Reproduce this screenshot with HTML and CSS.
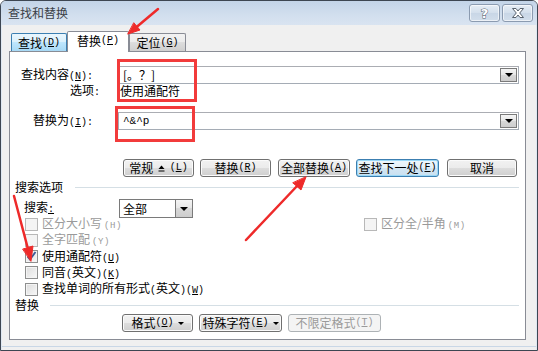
FILE: index.html
```html
<!DOCTYPE html>
<html lang="zh-CN">
<head>
<meta charset="utf-8">
<title>查找和替换</title>
<link rel="stylesheet" href="styles.css">
</head>
<body>
<div class="window">
  <div class="titlebar">
    <span class="title">查找和替换</span>
    <div class="capbtns">
      <div class="capbtn"><span class="help">?</span></div>
      <div class="capbtn">
        <svg width="16" height="12" viewBox="0 0 16 12"><path d="M2.5 1.5h3.5l2 2.5 2-2.5h3.5l-3.8 4.5 3.8 4.5h-3.5l-2-2.5-2 2.5h-3.5l3.8-4.5z" fill="#fff" stroke="#58626e" stroke-width="1" stroke-linejoin="round"/></svg>
      </div>
    </div>
  </div>

  <div class="tabs">
    <div class="tab tab-hover">查找<span class="m">(<u>D</u>)</span></div>
    <div class="tab tab-active">替换<span class="m">(<u>P</u>)</span></div>
    <div class="tab tab-plain">定位<span class="m">(<u>G</u>)</span></div>
  </div>

  <div class="panel">
    <div class="frow">
      <label class="flabel">查找内容<span class="m">(<u>N</u>):</span></label>
      <div class="combo">
        <span class="ctext cjk">[。？]</span>
        <span class="dd"><i class="tri"></i></span>
      </div>
    </div>
    <div class="orow">
      <span class="olabel">选项<span class="m">:</span></span>
      <span class="ovalue">使用通配符</span>
    </div>
    <div class="frow frow2">
      <label class="flabel">替换为<span class="m">(<u>I</u>):</span></label>
      <div class="combo">
        <span class="ctext mono">^&amp;^p</span>
        <span class="dd"><i class="tri"></i></span>
      </div>
    </div>

    <div class="btnrow">
      <button class="btn w71">常规&nbsp;<svg class="updown" width="7" height="7" viewBox="0 0 7 7"><path d="M3.5 0.5L6.5 4H0.5z" fill="#000"/><rect x="0.5" y="5.5" width="6" height="1" fill="#000"/></svg>&nbsp;<span class="m">(<u>L</u>)</span></button>
      <button class="btn w71 g6">替换<span class="m">(<u>R</u>)</span></button>
      <button class="btn w72 g7">全部替换<span class="m">(<u>A</u>)</span></button>
      <button class="btn w83 g6 btn-default">查找下一处<span class="m">(<u>F</u>)</span></button>
      <button class="btn w70 g8">取消</button>
    </div>

    <div class="section">
      <span class="stitle">搜索选项</span>
      <span class="sline"></span>
    </div>

    <div class="searchrow">
      <span class="slabel">搜索<span class="m"><u>:</u></span></span>
      <div class="select">
        <span class="seltext">全部</span>
        <span class="selbtn"><i class="tri"></i></span>
      </div>
    </div>

    <div class="checks">
      <div class="crow crow-split">
        <div class="citem disabled"><span class="cb"></span><span>区分大小写<span class="m ms">(H)</span></span></div>
        <div class="citem disabled"><span class="cb"></span><span>区分全/半角<span class="m ms">(M)</span></span></div>
      </div>
      <div class="crow">
        <div class="citem disabled"><span class="cb"></span><span>全字匹配<span class="m ms">(Y)</span></span></div>
      </div>
      <div class="crow">
        <div class="citem"><span class="cb checked"><svg width="11" height="11" viewBox="0 0 11 11"><path d="M1.5 5.5l2.5 3 5.5-7.5" fill="none" stroke="#3b5998" stroke-width="1.8"/></svg></span><span>使用通配符<span class="m">(<u>U</u>)</span></span></div>
      </div>
      <div class="crow">
        <div class="citem"><span class="cb"></span><span>同音<span class="m">(</span>英文<span class="m">)(<u>K</u>)</span></span></div>
      </div>
      <div class="crow">
        <div class="citem"><span class="cb"></span><span>查找单词的所有形式<span class="m">(</span>英文<span class="m">)(<u>W</u>)</span></span></div>
      </div>
    </div>

    <div class="section section2">
      <span class="stitle">替换</span>
      <span class="sline"></span>
    </div>

    <div class="btnrow btnrow2">
      <button class="btn w71">格式<span class="m">(<u>O</u>)</span> <i class="tri small"></i></button>
      <button class="btn w83 g6">特殊字符<span class="m">(<u>E</u>)</span> <i class="tri small"></i></button>
      <button class="btn w93 g6 btn-disabled">不限定格式<span class="m">(<u>T</u>)</span></button>
    </div>
  </div>

  <div class="redbox box1"></div>
  <div class="redbox box2"></div>

  <svg class="annot" width="538" height="351" viewBox="0 0 538 351">
    <g fill="#ee2a2a" stroke="#ee2a2a" stroke-linecap="round">
      <line x1="158" y1="9" x2="136" y2="27.5" stroke-width="2.5"/>
      <polygon points="128,34 140,30 134,23" stroke-width="1"/>
      <line x1="246" y1="240" x2="298" y2="185" stroke-width="2.5"/>
      <polygon points="306,177 301,190 293,183" stroke-width="1"/>
      <line x1="14" y1="196" x2="28" y2="249" stroke-width="2.5"/>
      <polygon points="31,261 33,246 23,249" stroke-width="1"/>
    </g>
  </svg>
</div>
</body>
</html>
```

FILE: styles.css
```css
* { box-sizing: border-box; margin: 0; padding: 0; }

html, body {
  width: 538px;
  height: 351px;
  overflow: hidden;
  background: #fff;
}

body {
  font: 12px/1 "Noto Sans CJK SC", "Noto Sans", sans-serif;
  color: #000;
}

u { text-decoration: underline; text-underline-offset: 1px; }

/* half-width mnemonic parts, 6px per character like the dialog's bitmap font */
.m {
  font: 10px/1 "Liberation Mono", monospace;
}
.ms {
  font-size: 9px;
  letter-spacing: 0.6px;
  margin-left: 2px;
}

.window {
  position: relative;
  width: 538px;
  height: 351px;
  border: 1px solid #3d4652;
  border-radius: 6px 6px 0 0;
  background: #f0f0f0;
  box-shadow: inset 1px 0 0 #dfe8f2, inset -1px 0 0 #dfe8f2, inset 0 -3px 0 #f0f0f0, inset 0 -4px 0 #c9d7e6;
  display: flex;
  flex-direction: column;
}

/* title bar */
.titlebar {
  height: 24px;
  display: flex;
  align-items: center;
  justify-content: space-between;
  padding: 0 4px 0 7px;
  background: linear-gradient(#c3d4e8, #d2dfee 60%, #d9e4f1);
  border-radius: 5px 5px 0 0;
}
.title {
  color: #3a3f47;
  font-size: 12px;
}
.capbtns {
  display: flex;
  gap: 2px;
  align-self: flex-start;
  margin-top: 3px;
}
.capbtn {
  width: 31px;
  height: 18px;
  border: 1px solid #8b9bb0;
  border-radius: 3px;
  background: linear-gradient(#e6edf5, #d3dfec 50%, #c8d6e6 50%, #d2deeb);
  box-shadow: inset 0 0 0 1px rgba(255,255,255,0.6);
  display: flex;
  align-items: center;
  justify-content: center;
}
.help {
  font: bold 13px/1 "DejaVu Sans", sans-serif;
  color: #fff;
  -webkit-text-stroke: 1px #58626e;
  paint-order: stroke fill;
}

/* tabs */
.tabs {
  position: relative;
  z-index: 2;
  height: 27px;
  display: flex;
  align-items: flex-end;
  padding-left: 10px;
}
.tab {
  height: 18px;
  margin-bottom: 1px;
  border: 1px solid #898c95;
  border-bottom: none;
  border-radius: 2px 2px 0 0;
  display: flex;
  align-items: center;
  justify-content: center;
  font-size: 12px;
  white-space: nowrap;
}
.tab-hover {
  width: 56px;
  border-color: #3c7fb1;
  background: linear-gradient(#eaf6fd, #d9f0fc 50%, #bee6fd 50%, #a7d9f5);
}
.tab-active {
  width: 62px;
  height: 21px;
  margin-bottom: 0;
  background: #fff;
  padding-bottom: 2px;
}
.tab-plain {
  width: 57px;
  background: linear-gradient(#f2f2f2, #ebebeb 50%, #dddddd 50%, #cfcfcf);
}

/* panel */
.panel {
  position: relative;
  z-index: 1;
  margin: -1px 0 0 8px;
  width: 517px;
  height: 289px;
  background: #fff;
  border: 1px solid #898c95;
  padding-top: 14px;
  display: flex;
  flex-direction: column;
}

.frow {
  display: flex;
  align-items: center;
  height: 18px;
}
.frow2 { margin-top: 15px; }
.flabel {
  width: 108px;
  text-align: right;
  padding-right: 25px;
  white-space: nowrap;
}
.combo {
  flex: 1;
  margin-right: 6px;
  height: 18px;
  border: 1px solid #a5acb5;
  border-top-color: #abadb3;
  display: flex;
  align-items: center;
  justify-content: space-between;
  padding-left: 4px;
}
.ctext.cjk { font-size: 12px; }
.ctext.mono { font: 11px/1 "Liberation Mono", monospace; }
.dd {
  width: 17px;
  height: 14px;
  margin-right: 1px;
  border: 1px solid #7a7a7a;
  background: linear-gradient(#f4f4f4, #e6e6e6 50%, #d8d8d8 50%, #cdcdcd);
  display: flex;
  align-items: center;
  justify-content: center;
}
.tri {
  display: inline-block;
  width: 0;
  height: 0;
  border-left: 4px solid transparent;
  border-right: 4px solid transparent;
  border-top: 4px solid #000;
}
.tri.small {
  border-left-width: 3px;
  border-right-width: 3px;
  border-top-width: 3px;
  margin-left: 4px;
}

.orow {
  height: 13px;
  display: flex;
  align-items: center;
}
.olabel {
  width: 108px;
  text-align: right;
  padding-right: 18px;
}
.ovalue { margin-left: 2px; }

/* buttons */
.btnrow {
  display: flex;
  margin-top: 29px;
  margin-left: 113px;
}
.btnrow2 {
  margin-top: 2px;
  margin-left: 112px;
}
.btn {
  height: 18px;
  border: 1px solid #707070;
  border-radius: 3px;
  background: linear-gradient(#f2f2f2, #ebebeb 50%, #dddddd 50%, #cfcfcf);
  box-shadow: inset 0 0 0 1px #fbfbfb;
  font: 12px/1 "Noto Sans CJK SC", "Noto Sans", sans-serif;
  color: #000;
  display: flex;
  align-items: center;
  justify-content: center;
  white-space: nowrap;
}
.btn-default {
  border-color: #3c7fb1;
  box-shadow: inset 0 0 0 1px #9ad8f7;
  background: linear-gradient(#eef6fb, #e3f0f8 50%, #d3e6f3 50%, #c9e0f0);
}
.btn-disabled {
  border-color: #adb2b5;
  background: #f4f4f4;
  box-shadow: none;
  color: #9a9a9a;
}
.updown { margin: 0 2px; }
.w70 { width: 70px; }
.w71 { width: 71px; }
.w72 { width: 72px; }
.w83 { width: 83px; }
.w93 { width: 93px; }
.g6 { margin-left: 6px; }
.g7 { margin-left: 7px; }
.g8 { margin-left: 8px; }

/* sections */
.section {
  height: 14px;
  margin-top: 3px;
  display: flex;
  align-items: center;
  padding-left: 5px;
}
.section2 { margin-top: 1px; }
.stitle { white-space: nowrap; }
.sline {
  flex: 1;
  height: 1px;
  background: #d5dfe5;
  margin: 1px 6px 0 12px;
}
.section2 .sline { margin-left: 11px; }

.searchrow {
  height: 19px;
  margin-top: 5px;
  display: flex;
  align-items: flex-start;
  padding-left: 14px;
}
.slabel {
  width: 95px;
  line-height: 15px;
}
.select {
  width: 74px;
  height: 19px;
  border: 1px solid #7a7a7a;
  display: flex;
  align-items: center;
  justify-content: space-between;
  padding-left: 3px;
}
.selbtn {
  width: 17px;
  height: 17px;
  border-left: 1px solid #7a7a7a;
  background: linear-gradient(#f4f4f4, #e6e6e6 50%, #d8d8d8 50%, #cdcdcd);
  display: flex;
  align-items: center;
  justify-content: center;
}

/* checkboxes */
.checks {
  margin-top: -2px;
  padding-left: 15px;
}
.crow {
  height: 16.25px;
  display: flex;
  align-items: center;
}
.crow-split {
  display: grid;
  grid-template-columns: 339px 1fr;
  align-items: center;
}
.citem {
  display: flex;
  align-items: center;
  gap: 4px;
  white-space: nowrap;
}
.cb {
  width: 13px;
  height: 13px;
  border: 1px solid #8e8f8f;
  background: linear-gradient(135deg, #dcdcdc, #f8f8f8);
  box-shadow: inset 0 0 0 1px #f4f4f4;
  display: flex;
  align-items: center;
  justify-content: center;
}
.citem.disabled { color: #9a9a9a; }
.citem.disabled .cb {
  border-color: #b8b8b8;
  background: #f4f4f4;
  box-shadow: none;
}

/* annotations */
.redbox {
  position: absolute;
  border: 3px solid #f23b3b;
  z-index: 5;
}
.box1 { left: 116px; top: 58px; width: 80px; height: 43px; }
.box2 { left: 114px; top: 105px; width: 80px; height: 36px; }
.annot {
  position: absolute;
  left: -1px;
  top: -1px;
  z-index: 6;
  pointer-events: none;
}
```
